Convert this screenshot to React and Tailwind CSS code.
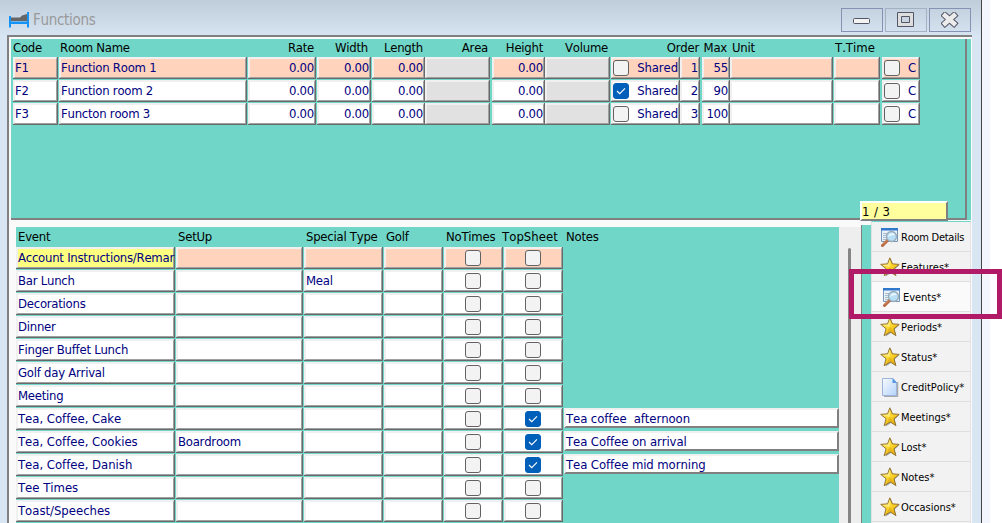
import { useState } from "react";
import clsx from "clsx";

const ROOMS = [
  { code: "F1", name: "Function Room 1", shared: false, order: 1, max: 55 },
  { code: "F2", name: "Function room 2", shared: true, order: 2, max: 90 },
  { code: "F3", name: "Functon room 3", shared: false, order: 3, max: 100 },
];

const EVENTS = [
  { name: "Account Instructions/Remar" },
  { name: "Bar Lunch", type: "Meal" },
  { name: "Decorations" },
  { name: "Dinner" },
  { name: "Finger Buffet Lunch" },
  { name: "Golf day Arrival" },
  { name: "Meeting" },
  { name: "Tea, Coffee, Cake", wide: true, top: true, notes: "Tea coffee  afternoon" },
  { name: "Tea, Coffee, Cookies", wide: true, setup: "Boardroom", top: true, notes: "Tea Coffee on arrival" },
  { name: "Tea, Coffee, Danish", wide: true, top: true, notes: "Tea Coffee mid morning" },
  { name: "Tee Times", wide: true },
  { name: "Toast/Speeches", wide: true },
];

const ACTIONS = [
  { label: "Room Details", icon: "search" },
  { label: "Features*", icon: "star" },
  { label: "Events*", icon: "search" },
  { label: "Periods*", icon: "star" },
  { label: "Status*", icon: "star" },
  { label: "CreditPolicy*", icon: "page" },
  { label: "Meetings*", icon: "star" },
  { label: "Lost*", icon: "star" },
  { label: "Notes*", icon: "star" },
  { label: "Occasions*", icon: "star" },
];

function BedIcon() {
  return (
    <svg width="20" height="16" viewBox="0 0 20 16">
      <path d="M2 5.500h9l2-2 5-1.500v7H2Z" fill="#666" />
      <path d="M0 4h2v5.500h16V0h2v15.500h-2V12H2v3.500H0Z" fill="#1593f5" />
    </svg>
  );
}

function StarIcon() {
  return (
    <svg width="20" height="20" viewBox="0 0 20 20" className="shrink-0">
      <defs>
        <linearGradient id="gold" x1="0" y1="0" x2="1" y2="1">
          <stop offset="0" stopColor="#fff08a" />
          <stop offset=".5" stopColor="#fcd62c" />
          <stop offset="1" stopColor="#d99c08" />
        </linearGradient>
      </defs>
      <path d="m11 2 2.3 6h6l-4.8 4.6 2 6.600-5.300-3.400-5.600 3.600 1.600-6.700L2 8.500h6.300Z" fill="#666" opacity=".6" />
      <path
        d="m9.800.8 2.500 6 6.900.6-5.200 4.300 1.800 6.800-5.600-3.600-6 3.800 1.900-7L.7 7.400l6.900-.6Z"
        fill="url(#gold)"
        stroke="#957434"
        strokeWidth="1"
        strokeLinejoin="round"
      />
      <path d="m9.800 2.500-.2 7.500L3 8l5-.3Z" fill="#fff4a0" opacity=".7" />
      <path d="m10 10 4.500 7-4.600-3-4.200 2.600Z" fill="#dba112" opacity=".5" />
    </svg>
  );
}

function SearchIcon() {
  return (
    <svg width="20" height="20" viewBox="0 0 20 20" className="shrink-0">
      <path d="M1.500 1.500h16v13h-16Z" fill="#e9f1fa" stroke="#7897b8" />
      <path d="M1 1h17v2.500H1Z" fill="#2f78cc" />
      <path d="M3 6.500h5M3 8.500h3M3 10.500h3M3 12.500h4" stroke="#a7bccf" />
      <path d="m7.500 13.500-5 5" stroke="#b5683f" strokeWidth="3" strokeLinecap="round" />
      <path d="m7 13.500-4 4" stroke="#e19063" strokeWidth="1" />
      <circle cx="11.500" cy="9.500" r="5" fill="#b8dff5" stroke="#9aabb8" strokeWidth="1.300" />
      <path d="M8 10c1-4 5-5 7-2-3 0-4 0-7 2Z" fill="#eefaff" />
    </svg>
  );
}

function PageIcon() {
  return (
    <svg width="20" height="20" viewBox="0 0 20 20" className="shrink-0">
      <defs>
        <linearGradient id="sheet" x1="0" y1="0" x2="1" y2="1">
          <stop offset="0" stopColor="#f8fbff" />
          <stop offset="1" stopColor="#b4d3fa" />
        </linearGradient>
      </defs>
      <path d="M4 19.500h13.500V5" fill="none" stroke="#777" strokeOpacity=".6" strokeWidth="1.500" />
      <path d="M2.500 1.500h10.500l3.500 4v13H2.500Z" fill="url(#sheet)" stroke="#9cb4da" />
      <path d="M12.500 1v5h4.500Z" fill="#5797e5" />
    </svg>
  );
}

const ICONS = { star: StarIcon, search: SearchIcon, page: PageIcon };

function CheckBox({ checked, onChange, className }) {
  return (
    <button
      onClick={onChange}
      className={clsx(
        "flex h-4 w-4 shrink-0 items-center justify-center rounded-[3px] border",
        checked ? "border-[#005fb8] bg-[#005fb8]" : "border-[#626262] bg-[#f3f3f3]",
        className
      )}
    >
      {checked && (
        <svg width="10" height="8" viewBox="0 0 10 8" fill="none" stroke="#fff" strokeWidth="1.100">
          <path d="m1 4 2.700 2.700L9 1.300" />
        </svg>
      )}
    </button>
  );
}

// Raised field: light on the top left, two grey lines on the bottom right
function Cell({ className, tone = "bg-white", right, children }) {
  return (
    <div className={clsx("h-[22px] shrink-0 border-r border-b border-[#696969]", className)}>
      <div
        className={clsx(
          "flex h-[21px] items-center whitespace-pre border-t-2 border-l-2 border-r border-b border-t-[#f0f0f0] border-l-[#f0f0f0] border-r-[#a0a0a0] border-b-[#a0a0a0] pb-px",
          right && "justify-end",
          tone
        )}
      >
        {children}
      </div>
    </div>
  );
}

function RoomRow({ room, selected, onSelect, onToggle }) {
  const tone = selected ? "bg-[#ffd3bc]" : "bg-white";
  return (
    <div className="flex h-[23px]" onClick={onSelect}>
      <Cell className="mr-px w-[45px]" tone={tone}>{room.code}</Cell>
      <Cell className="mr-px w-[188px]" tone={tone}>{room.name}</Cell>
      <Cell className="mr-px w-[68px]" tone={tone} right>0.00</Cell>
      <Cell className="mr-px w-[54px]" tone={tone} right>0.00</Cell>
      <Cell className="w-[53px]" tone={tone} right>0.00</Cell>
      <Cell className="mr-[2px] w-[65px]" tone="bg-[#e1e1e1]" />
      <Cell className="w-[53px]" tone={tone} right>0.00</Cell>
      <Cell className="mr-px w-[65px]" tone="bg-[#e1e1e1]" />
      <Cell className="w-[69px]" tone={tone} right>
        <CheckBox checked={room.shared} onChange={onToggle} className="mr-auto" />
        <span className="pt-px tracking-[-0.1px]">Shared</span>
      </Cell>
      <Cell className="mr-[2px] w-[20px]" tone={tone} right>{room.order}</Cell>
      <Cell className="w-[28px]" tone={tone} right>{room.max}</Cell>
      <Cell className="mr-px w-[103px]" tone={tone} />
      <Cell className="mr-[2px] w-[46px]" tone={tone} />
      <Cell className="w-[38px]" tone={tone} right>
        <CheckBox className="mr-auto" />
        <span className="pt-px pr-[2px]">C</span>
      </Cell>
    </div>
  );
}

function RoomGrid({ rooms, selected, setSelected, toggle }) {
  return (
    <div className="h-[181px] w-[956px] border-r-2 border-b-2 border-r-[#808080] border-b-[#808080] pl-[2px]">
      <div className="flex h-[18px] items-center text-black">
        <span className="w-[47px]">Code</span>
        <span className="w-[188px]">Room Name</span>
        <span className="w-[66px] text-right">Rate</span>
        <span className="w-[54px] text-right">Width</span>
        <span className="w-[55px] text-right">Length</span>
        <span className="w-[65px] text-right">Area</span>
        <span className="w-[55px] text-right">Height</span>
        <span className="w-[65px] text-right">Volume</span>
        <span className="w-[91px] text-right">Order</span>
        <span className="w-[28px] text-right">Max</span>
        <span className="ml-[5px] w-[103px]">Unit</span>
        <span className="tracking-normal">T.Time</span>
      </div>
      {rooms.map((room, i) => (
        <RoomRow
          key={room.code}
          room={room}
          selected={selected === i}
          onSelect={() => setSelected(i)}
          onToggle={() => toggle(i)}
        />
      ))}
    </div>
  );
}

function EventRow({ event, selected }) {
  const tone = selected ? "bg-[#ffd3bc]" : "bg-white";
  return (
    <div className="flex h-[23px]">
      <Cell className="mr-px w-[159px]" tone={selected ? "bg-[#ffff80]" : tone}>
        <span className={clsx(event.wide && "tracking-[-0.02px]")}>{event.name}</span>
      </Cell>
      <Cell className="mr-px w-[127px]" tone={tone}>{event.setup}</Cell>
      <Cell className="mr-px w-[79px]" tone={tone}>{event.type}</Cell>
      <Cell className="mr-px w-[59px]" tone={tone} />
      <Cell className="mr-px w-[59px]" tone={tone}>
        <CheckBox className="ml-[19px]" />
      </Cell>
      <Cell className="mr-px w-[59px]" tone={tone}>
        <CheckBox checked={event.top} className="ml-[19px]" />
      </Cell>
      {event.notes && (
        <div className="h-[20px] w-[275px] whitespace-pre border-2 border-[#f0f0f0] border-r-[#808080] border-b-[#808080] bg-white leading-[17px] tracking-[-0.09px]">
          {event.notes}
        </div>
      )}
    </div>
  );
}

function EventGrid() {
  return (
    <div className="h-[297px] w-[823px] overflow-hidden bg-[#70d6c8]">
      <div className="flex h-[20px] items-center pl-[2px] text-black">
        <span className="w-[160px]">Event</span>
        <span className="w-[128px]">SetUp</span>
        <span className="w-[80px] whitespace-nowrap">Special Type</span>
        <span className="w-[60px]">Golf</span>
        <span className="mr-[6px] w-[50px] whitespace-nowrap">NoTimes</span>
        <span className="w-[64px] tracking-[0.05px]">TopSheet</span>
        <span>Notes</span>
      </div>
      {EVENTS.map((event, i) => (
        <EventRow key={event.name} event={event} selected={i === 0} />
      ))}
    </div>
  );
}

function Sidebar({ active, setActive }) {
  return (
    <div className="h-[302px] w-[100px] overflow-hidden border-x border-t border-x-[#e2e2e2] border-t-[#70d6c8] bg-[#f2f2f2] text-[11px] text-black">
      {ACTIONS.map(({ label, icon }, i) => {
        const Icon = ICONS[icon];
        return (
          <button
            key={label}
            onClick={() => setActive(i)}
            className={clsx(
              "flex h-[30px] w-full items-center whitespace-nowrap border-b border-[#dedede] pt-px",
              active === i ? "bg-[#fafafa] pl-[10px]" : "pl-[8px]"
            )}
          >
            <Icon />
            <span className={clsx("ml-px pt-px", i === 0 ? "tracking-[-0.25px]" : "tracking-[-0.04px]")}>{label}</span>
          </button>
        );
      })}
    </div>
  );
}

function TitleBar() {
  return (
    <div className="flex h-[35px] items-start bg-linear-to-b from-[#bfcddb] to-[#d6e3f0] pl-[9px]">
      <div className="mt-[12px]">
        <BedIcon />
      </div>
      <span className="mt-[10px] ml-[4px] text-[15px] leading-[20px] tracking-[-0.3px] text-[#999]">Functions</span>
      <div className="mt-[8px] mr-[10px] ml-auto flex gap-[2px]">
        <button className="flex h-6 w-[42px] items-center justify-center border border-[#8493b3]">
          <svg width="18" height="8" viewBox="0 0 18 8">
            <rect x=".5" y="2.500" width="16" height="5" rx="1" fill="#f3f3f3" stroke="#535666" />
          </svg>
        </button>
        <button className="flex h-6 w-[42px] items-center justify-center border border-[#a2b1c4]">
          <svg width="18" height="16" viewBox="0 0 18 16" fill="none" stroke="#535666">
            <path d="M.5.500h16v14H.5Z" fill="#dedede" />
            <path d="M4.500 4.500h8v6h-8Z" fill="#c9d4e0" />
          </svg>
        </button>
        <button className="flex h-6 w-[42px] items-center justify-center border border-[#8493b3]">
          <svg width="18" height="16" viewBox="0 0 18 16" fill="none" strokeLinecap="square">
            <path d="m4 3.500 9 8M13 3.500l-9 8" stroke="#535666" strokeWidth="6.500" />
            <path d="m4 3.500 9 8M13 3.500l-9 8" stroke="#ececec" strokeWidth="4.500" />
          </svg>
        </button>
      </div>
    </div>
  );
}

export default function App() {
  const [rooms, setRooms] = useState(ROOMS);
  const [selected, setSelected] = useState(0);
  const [active, setActive] = useState(2);

  const toggle = (index) =>
    setRooms((prev) => prev.map((r, i) => (i === index ? { ...r, shared: !r.shared } : r)));

  return (
    <div className="relative flex h-[523px] w-[1002px] overflow-hidden bg-white font-['DejaVu_Sans_Condensed','DejaVu_Sans',sans-serif] text-[13px] leading-[16px] tracking-[-0.25px] text-[#000080] [font-kerning:none]">
      <div className="h-full w-[982px] border-r border-[#454545] bg-[#d8e5f2]">
        <TitleBar />
        <div className="ml-[7px] h-[488px] w-[965px] border-t-2 border-l-2 border-[#808080] bg-[#fafafa]">
          {/* Rooms */}
          <div className="h-[183px] border-t-2 border-l-2 border-[#fafafa]">
            <div className="h-full w-[960px] bg-[#70d6c8]">
              <RoomGrid rooms={rooms} selected={selected} setSelected={setSelected} toggle={toggle} />
            </div>
          </div>

          {/* Events and actions */}
          <div className="flex h-[303px] pt-px">
            <div className="flex h-full w-[852px] pt-[6px] pl-[7px]">
              <EventGrid />
              <div className="h-full w-[22px] bg-[#eee] pt-[21px] pl-[9px]">
                <div className="h-full w-[3px] rounded-t bg-[#858585]" />
              </div>
            </div>
            <div className="mt-[4px] w-[10px] border-l border-[#808080] bg-[#70d6c8]" />
            <Sidebar active={active} setActive={setActive} />
          </div>
        </div>
      </div>
      <div className="w-[8px] bg-[#f3f7fd]" />

      {/* Record counter */}
      <div className="absolute top-[201px] left-[860px] h-[20px] w-[88px] border-2 border-white border-r-[#808080] border-b-[#808080] bg-[#ffff9e] leading-[18px] tracking-[0.4px] text-black">
        1 / 3
      </div>

      <div className="pointer-events-none absolute top-[269px] left-[849px] h-[50px] w-[153px] border-[5px] border-[#b01a67]" />
    </div>
  );
}
